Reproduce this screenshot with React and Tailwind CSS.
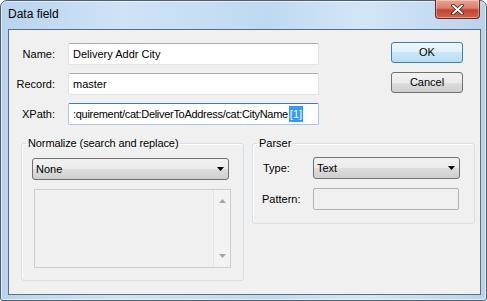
import React from 'react';

const btnGray =
  'bg-[linear-gradient(#f2f2f2_0%,#ebebeb_50%,#dddddd_50%,#cfcfcf_100%)] border-[#707070]';
const btnBlue =
  'bg-[linear-gradient(#eef7fd_0%,#dff0fb_50%,#cbe7f8_50%,#b7def5_100%)] border-[#3c7fb1]';
const textBox =
  'bg-white border border-[#e2e3ea] border-t-[#abadb3] rounded-[2px]';

function CloseButton() {
  return (
    <div className="-mt-[1px] mr-[1px] w-[45px] h-[19px] flex items-center justify-center rounded-b-[4px] border border-t-0 border-[#6b2a21] bg-[linear-gradient(#e8a493_0%,#d8806c_45%,#c4442d_55%,#d0654f_100%)] shadow-[inset_0_0_0_1px_rgba(255,255,255,0.35)]">
      <svg width="13" height="11" viewBox="0 0 13 11">
        <path d="M2 1.5 L11 9.5 M11 1.5 L2 9.5" stroke="#4b1a12" strokeWidth="3.6" strokeLinecap="round" />
        <path d="M2 1.5 L11 9.5 M11 1.5 L2 9.5" stroke="#ffffff" strokeWidth="2" strokeLinecap="round" />
      </svg>
    </div>
  );
}

function Select({ value, width }) {
  return (
    <div
      className={`${width} h-[22px] flex items-center justify-between border rounded-[3px] pl-[3px] pr-[4px] ${btnGray}`}
    >
      <span>{value}</span>
      <svg width="7" height="4" viewBox="0 0 7 4">
        <path d="M0 0 H7 L3.5 4 Z" fill="#000" />
      </svg>
    </div>
  );
}

function FormRow({ label, children }) {
  return (
    <div className="flex items-center h-[22px]">
      <span className="w-[46px] text-right">{label}</span>
      <div className="ml-[13px]">{children}</div>
    </div>
  );
}

export default function App() {
  return (
    <div
      className="w-[487px] h-[301px] bg-white text-[11px] text-black"
      style={{ fontFamily: '"Liberation Sans", Arial, sans-serif' }}
    >
      <div className="w-full h-full flex flex-col rounded-t-[7px] rounded-b-[3px] border border-[#4e5f72] bg-[linear-gradient(90deg,#b9d4ef_0%,#cfe3f6_25%,#c0d9f0_55%,#d3e6f7_75%,#b9d3ed_100%)] shadow-[inset_0_0_0_1px_rgba(255,255,255,0.55)] pl-[7px] pr-[5px] pb-[5px]">
        {/* Title bar */}
        <div className="h-[28px] flex items-start justify-between">
          <span className="mt-[6px] text-[12px] leading-[14px]">Data field</span>
          <CloseButton />
        </div>

        {/* Client area */}
        <div className="flex-1 border border-[#5e6c7b] bg-[#f0f0f0]">
          <div className="flex items-start">
            <div className="pt-[13px] flex flex-col gap-[8px]">
              <FormRow label="Name:">
                <div className={`w-[251px] h-[22px] flex items-center px-[4px] ${textBox}`}>
                  Delivery Addr City
                </div>
              </FormRow>
              <FormRow label="Record:">
                <div className={`w-[251px] h-[22px] flex items-center px-[4px] ${textBox}`}>
                  master
                </div>
              </FormRow>
              <FormRow label="XPath:">
                <div className="w-[251px] h-[22px] flex items-center pl-[4px] overflow-hidden whitespace-nowrap bg-white border border-[#a6c9e2] border-t-[#3d7bad] rounded-[2px]">
                  <span className="tracking-[-0.3px]">:quirement/cat:DeliverToAddress/cat:CityName</span>
                  <span className="ml-[1px] px-[1px] bg-[#3399ff] text-white">[1]</span>
                </div>
              </FormRow>
            </div>

            <div className="ml-[72px] pt-[12px] flex flex-col gap-[9px]">
              <button className={`w-[72px] h-[21px] border rounded-[3px] ${btnBlue}`}>OK</button>
              <button className={`w-[72px] h-[21px] border rounded-[3px] ${btnGray}`}>Cancel</button>
            </div>
          </div>

          <div className="mt-[11px] pl-[12px] flex items-start gap-[8px]">
            {/* Normalize */}
            <fieldset className="w-[223px] h-[145px] border border-[#d5dfe5] rounded-[3px] shadow-[inset_1px_1px_0_#ffffff]">
              <legend className="ml-[4px] px-[2px] leading-[14px] tracking-[-0.1px]">Normalize (search and replace)</legend>
              <div className="mt-[8px] ml-[10px]">
                <Select value="None" width="w-[197px]" />
              </div>
              <div className="mt-[9px] ml-[12px] w-[197px] h-[79px] flex justify-end border border-[#c9cdd2] bg-[#f0f0f0]">
                <div className="w-[17px] h-full flex flex-col items-center justify-between py-[9px] bg-[#f3f3f3] border-l border-[#e4e4e4]">
                  <svg width="7" height="4" viewBox="0 0 7 4">
                    <path d="M3.5 0 L7 4 H0 Z" fill="#a3a3a3" />
                  </svg>
                  <svg width="7" height="4" viewBox="0 0 7 4">
                    <path d="M0 0 H7 L3.5 4 Z" fill="#a3a3a3" />
                  </svg>
                </div>
              </div>
            </fieldset>

            {/* Parser */}
            <fieldset className="w-[223px] h-[88px] border border-[#d5dfe5] rounded-[3px] shadow-[inset_1px_1px_0_#ffffff]">
              <legend className="ml-[4px] px-[2px] leading-[14px]">Parser</legend>
              <div className="mt-[7px] ml-[10px] flex items-center">
                <span className="w-[50px]">Type:</span>
                <Select value="Text" width="w-[147px]" />
              </div>
              <div className="mt-[9px] ml-[9px] flex items-center">
                <span className="w-[51px]">Pattern:</span>
                <div className="w-[146px] h-[22px] border border-[#adb2b5] rounded-[2px] bg-[#f0f0f0]" />
              </div>
            </fieldset>
          </div>
        </div>
      </div>
    </div>
  );
}
